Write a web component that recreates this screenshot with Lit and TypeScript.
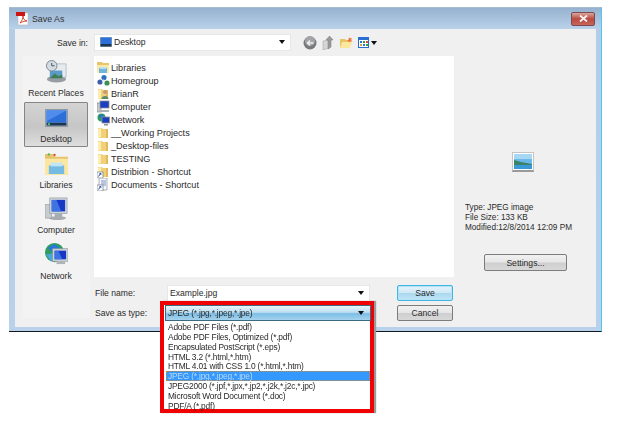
import { LitElement, html, css, svg } from "lit";
import { customElement } from "lit/decorators.js";

const folder = (extra = svg``) => html`<svg class="fi" viewBox="0 0 13 13"><path d="M1 2h4l1 1h5v9H1z" fill="#f0d078"/><path d="M1 3v9l3-1V2z" fill="#fbeeb0"/><path d="M9 3h2v9H9z" fill="#e2b95a"/>${extra}</svg>`;
const shortcut = svg`<rect x="0" y="7" width="6" height="6" fill="#fff" stroke="#778"  stroke-width=".7"/><path d="M1.5 11.5l2-3M2.5 8.5h1.4v1.4" stroke="#1b4fa8" fill="none"/>`;

const fileIcons = [
  html`<svg class="fi" viewBox="0 0 13 13"><path d="M0 1h5l1 1h6v4H0z" fill="#e8c56a"/><path d="M0 4h12v8H0z" fill="#fbe9a8" /><path d="M2 7h8v5H2z" fill="#6fb4dc"/><path d="M3 6h6v2H3z" fill="#b8e0f4"/></svg>`,
  html`<svg class="fi" viewBox="0 0 13 13"><circle cx="7" cy="3.5" r="2.6" fill="#2f6fc0"/><circle cx="3" cy="8" r="2.6" fill="#3c5fa8"/><circle cx="10" cy="9" r="2.6" fill="#3d8f55"/><circle cx="6.5" cy="7" r="1.6" fill="#dbe8f6"/></svg>`,
  folder(svg`<circle cx="8" cy="5" r="2" fill="#c79a78"/><path d="M4.5 12c0-4 7-4 7 0z" fill="#5d8a68"/>`),
  html`<svg class="fi" viewBox="0 0 13 13"><rect x="0" y="3" width="4" height="9" fill="#c8ccd0" stroke="#777" stroke-width=".6"/><rect x="3" y="1" width="9" height="7" fill="#1c3fc0" stroke="#8a9098" stroke-width=".8"/><path d="M2 10h10v2H2z" fill="#aab0b6"/></svg>`,
  html`<svg class="fi" viewBox="0 0 13 13"><circle cx="4.5" cy="4.5" r="4" fill="#2d9a6a"/><path d="M2 2.5l3-1 2 2-3 2z" fill="#2c6fcf"/><rect x="5" y="4" width="7.5" height="6" fill="#1c3fc0" stroke="#8a9098" stroke-width=".8"/><path d="M7 11h4v1.5H7z" fill="#8a9098"/></svg>`,
  folder(),
  folder(),
  folder(),
  folder(shortcut),
  html`<svg class="fi" viewBox="0 0 13 13"><path d="M2 0h8v12H2z" fill="#f4f6fa" stroke="#8a94a4" stroke-width=".7"/><path d="M4 3h5M4 5h5M4 7h5" stroke="#5d7fb8" stroke-width=".8"/>${shortcut}</svg>`,
];

const files = ["Libraries", "Homegroup", "BrianR", "Computer", "Network", "__Working Projects", "_Desktop-files", "TESTING", "Distribion - Shortcut", "Documents - Shortcut"];
const types = ["Adobe PDF Files (*.pdf)", "Adobe PDF Files, Optimized (*.pdf)", "Encapsulated PostScript (*.eps)", "HTML 3.2 (*.html,*.htm)", "HTML 4.01 with CSS 1.0 (*.html,*.htm)", "JPEG (*.jpg,*.jpeg,*.jpe)", "JPEG2000 (*.jpf,*.jpx,*.jp2,*.j2k,*.j2c,*.jpc)", "Microsoft Word Document (*.doc)", "PDF/A (*.pdf)"];

const places = [
  { label: "Recent Places", cls: "first", icon: html`<svg class="pi" viewBox="0 0 24 24"><ellipse cx="12" cy="20" rx="10" ry="3.5" fill="#9a9ea4"/><path d="M8 4h14v14H8z" fill="#e6ebf0" stroke="#a4acb4" stroke-width=".7"/><path d="M5 11h13v8H5z" fill="#5c9ac8"/><path d="M5 19l5-5 4 3 4-2v4z" fill="#3f7d52"/><circle cx="7" cy="6" r="5.500" fill="#d4dce2" stroke="#7b8692"/><path d="M7 3v3h3" stroke="#405060" fill="none"/></svg>` },
  { label: "Desktop", cls: "sel", icon: html`<svg class="pi" viewBox="0 0 24 20"><rect x="0.5" y="0.5" width="23" height="18" fill="#b9c3cc" stroke="#8b98a4"/><rect x="1.5" y="1.5" width="21" height="13" fill="#2d6fd8"/><path d="M1.5 1.5h21L1.5 13z" fill="#4f8cec"/><rect x="1.5" y="14.5" width="21" height="3" fill="#1e3552"/><circle cx="4" cy="16" r="1.2" fill="#55c46c"/></svg>` },
  { label: "Libraries", cls: "", icon: html`<svg class="pi" viewBox="0 0 24 24"><path d="M0 2h9l2 3h13v19H0z" fill="#e5c36e"/><path d="M0 7h24v17H0z" fill="#fbe6a2"/><path d="M4 14h16v9H4z" fill="#73bbe2"/><path d="M6 11h12v4H6z" fill="#bfe5f6"/><circle cx="4" cy="2.5" r="1.2" fill="#4cb84c"/><circle cx="10" cy="3" r="1.2" fill="#d84a3c"/></svg>` },
  { label: "Computer", cls: "", icon: html`<svg class="pi" viewBox="0 0 24 24"><ellipse cx="13" cy="22" rx="9" ry="2" fill="#a8acb0"/><rect x="0" y="8" width="7" height="14" fill="#c7cccf" stroke="#8a8f94" stroke-width=".6"/><rect x="5" y="1" width="18" height="16" fill="#d0d6dc" stroke="#8d959c" stroke-width=".7"/><path d="M7 3h14v12H7z" fill="#1738c4"/><path d="M7 3h5l5 12H7z" fill="#3d74e2"/><path d="M10 17h8v4H10z" fill="#a6adb3"/></svg>` },
  { label: "Network", cls: "", icon: html`<svg class="pi" viewBox="0 0 24 24"><circle cx="10" cy="10" r="10" fill="#2f9c62"/><path d="M3 5l7-4 5 4-6 6z" fill="#2b78d8"/><path d="M1 12l6-1 3 6-4 2z" fill="#4aa8d8"/><rect x="8" y="6" width="16" height="13" fill="#ced4da" stroke="#8d959c" stroke-width=".7"/><path d="M10 8h12v9H10z" fill="#1738c4"/><path d="M10 8h4l4 9h-8z" fill="#3d74e2"/><path d="M12 19h9v3h-9z" fill="#aeb4b9"/></svg>` },
];

const deskSmall = html`<svg class="ds" viewBox="0 0 12 10"><rect width="12" height="10" fill="#9fb0bf"/><rect x=".5" y=".5" width="11" height="6.500" fill="#2d6fd8"/><rect x=".5" y="7" width="11" height="2.500" fill="#1e3552"/></svg>`;
const arrow = html`<span class="arrow"></span>`;

@customElement("app-root")
export class AppRoot extends LitElement {
  static styles = css`
    :host { display: block; width: 622px; height: 429px; background: #fff; overflow: hidden; font-family: "Liberation Sans", Arial, sans-serif; font-size: 8.6px; color: #2a2a2a; }
    .win { margin: 7px 0 0 9px; width: 593px; height: 325px; box-sizing: border-box; display: flex; flex-direction: column; background: linear-gradient(#b4cce6, #b9d1ea); border-right: 1px solid #48c8f4; border-bottom: 1px solid #101820; border-top: 1px solid #a8bccf; filter: blur(.3px); }
    .title { height: 21px; flex: none; display: flex; align-items: center; background: linear-gradient(#97b2d0, #b9d1ea); padding: 0 6px 0 7px; gap: 3px; }
    .title span { flex: 1; font-size: 8.8px; color: #333; }
    .pdf { width: 13px; height: 14px; }
    .close { width: 24px; height: 14px; box-sizing: border-box; border: 1px solid #7a4a50; border-radius: 2px; background: linear-gradient(#dca69c, #b94a3e 50%, #c9645a); display: flex; align-items: center; justify-content: center; }
    .close svg { width: 9px; height: 7px; }
    .body { flex: 1; margin: 0 5px 4px 6px; background: #f0f0f0; display: grid; grid-template-columns: 79px 360px 1fr; grid-template-rows: 27px 221px 1fr; }
    .bar { grid-column: 1 / -1; display: flex; align-items: center; position: relative; }
    .lbl { width: 73px; text-align: right; margin-right: 6px; }
    .combo { box-sizing: border-box; background: #fff; border: 1px solid #e6e6e6; display: flex; align-items: center; padding: 0 5px 0 2px; }
    .bar .combo { width: 197px; height: 17px; margin-top: -1px; gap: 2px; padding-left: 5px; }
    .ds { width: 12px; height: 10px; }
    .combo span:first-of-type { flex: 1; }
    .arrow { width: 0; height: 0; border: 3px solid transparent; border-top: 4px solid #111; border-bottom: 0; flex: none; }
    .tools { display: flex; align-items: center; margin-left: 12px; gap: 5px; }
    .tools svg { display: block; }
    .tools .arrow { margin-left: -3px; }
    .side { grid-row: 2 / 4; margin: 0 0 9px 8px; background: #f3f3f3; display: flex; flex-direction: column; align-items: stretch; width: 67px; }
    .place { height: 45.5px; box-sizing: border-box; display: flex; flex-direction: column; align-items: center; justify-content: flex-end; padding-bottom: 2px; margin-right: 2px; margin-left: 1px; line-height: 12px; gap: 1px; white-space: nowrap; }
    .place.first { padding-bottom: 3px; }
    .place.sel { border: 1px solid #858585; border-radius: 1px; padding-bottom: 1px; background: linear-gradient(#d4d4d4, #c6c6c6 55%, #dedede); }
    .pi { width: 23px; height: 23px; margin-bottom: 3px; }
    .sel .pi { height: 19px; margin-bottom: 4px; }
    .list { background: #fff; padding: 5px 0 0 3px; font-size: 9.1px; }
    .row { height: 13px; display: flex; align-items: center; gap: 1px; white-space: nowrap; }
    .fi { width: 13px; height: 13px; flex: none; }
    .prev { grid-row: 2 / 4; grid-column: 3; display: flex; flex-direction: column; padding-left: 11px; }
    .thumb { width: 22px; height: 20px; margin: 96px 0 0 47px; box-sizing: border-box; border: 1px solid #c4c4c4; border-bottom: 2px solid #9a9a9a; background: #fff; padding: 1px; flex: none; }
    .thumb svg { display: block; width: 100%; height: 100%; }
    .meta { margin-top: 31px; line-height: 10px; font-size: 8.2px; }
    .btn { box-sizing: border-box; border: 1px solid #7c7c7c; border-radius: 2px; background: linear-gradient(#f1f1f1, #e6e6e6 48%, #cfcfcf 52%, #d8d8d8); display: flex; align-items: center; justify-content: center; }
    .settings { width: 83px; height: 17px; margin: 21px 0 0 19px; }
    .form { display: grid; grid-template-columns: 72px 203px 56px; column-gap: 0; row-gap: 4px; grid-template-rows: 16px 16px; padding: 8px 0 0 1px; align-items: center; position: relative; }
    .form .combo { height: 17px; }
    .form .name { width: 203px; }
    .form .btn { height: 16px; margin-left: 27px; width: 56px; }
    .save { border-color: #3fb6e4; background: linear-gradient(#e6f4fb, #cfe8f6 48%, #a9d8f0 52%, #c4e4f6); box-shadow: inset 0 0 0 1px #b6e2f6; }
    .typecell { height: 16px; position: relative; }
    .red { position: absolute; left: -7px; top: -4px; width: 214px; height: 112px; box-sizing: border-box; border: 4px solid #f00000; box-shadow: 2px 0 1px #9a9a9a; background: #fff; z-index: 2; padding-left: 1px; font-size: 8.4px; letter-spacing: -.2px; }
    .sel-box { height: 16px; box-sizing: border-box; border: 1px solid #3d6a80; background: linear-gradient(#e8f4fa, #bcdff2 45%, #7dbde6 55%, #a6d3ee); display: flex; align-items: center; padding: 0 6px 0 2px; margin-right: -1px; }
    .sel-box span:first-child { flex: 1; }
    .opts { padding-top: 1px; }
    .opt { height: 9.85px; line-height: 10px; padding-left: 3px; white-space: nowrap; }
    .opt.on { background: #3399ff; color: #bcd8f4; outline: 1px dotted #c98a3c; outline-offset: -1px; margin-left: 1px; padding-left: 2px; }
  `;

  render() {
    return html`<div class="win">
      <div class="title">
        <svg class="pdf" viewBox="0 0 13 14"><path d="M2 1h10v12H2z" fill="#fff" stroke="#b8b8b8" stroke-width=".6"/><rect x="0" y="0" width="9" height="4" fill="#cc1414"/><path d="M4 11c2-2 3-5 3-7 0 3 2 5 4 5-3 0-5 1-7 2z" fill="none" stroke="#d8301c" stroke-width=".9"/></svg>
        <span>Save As</span>
        <div class="close"><svg viewBox="0 0 9 7"><path d="M1 .5l7 6M8 .5l-7 6" stroke="#f4f4f4" stroke-width="1.800"/></svg></div>
      </div>
      <div class="body">
        <div class="bar">
          <div class="lbl">Save in:</div>
          <div class="combo">${deskSmall}<span>Desktop</span>${arrow}</div>
          <div class="tools">
            <svg width="14" height="14" viewBox="0 0 14 14"><circle cx="7" cy="7" r="6.500" fill="#77797c"/><circle cx="7" cy="5" r="5" fill="#a2a4a7"/><path d="M10.500 7H5M7 4.500L4.500 7 7 9.500" stroke="#eee" stroke-width="1.500" fill="none"/></svg>
            <svg width="13" height="14" viewBox="0 0 13 14"><path d="M1 5l6-1v8l-6 2z" fill="#d6d6d6" stroke="#aaa" stroke-width=".6"/><path d="M6 13V4H4l3.500-4L11 4H9v7z" fill="#9a9a9a" stroke="#777" stroke-width=".5"/></svg>
            <svg width="13" height="12" viewBox="0 0 13 12"><path d="M0 2h5l1 1h4v8H0z" fill="#e8c468"/><path d="M0 11l2-6h10l-2 6z" fill="#fbe79e"/><path d="M9 0l1 1.500L12 1l-1 2 1.500 1.500H10l-1 1-.5-1.500L7 3.500 8.500 3z" fill="#ee7030"/></svg>
            <svg width="11" height="11" viewBox="0 0 11 11"><rect x=".5" y=".5" width="10" height="10" fill="#fff" stroke="#2a6fd0"/><rect x="1" y="1" width="9" height="2" fill="#2a6fd0"/><rect x="2" y="4" width="2" height="2" fill="#2c72d8"/><rect x="5" y="4" width="2" height="2" fill="#3aa03a"/><rect x="8" y="4" width="2" height="2" fill="#d84a3c"/><rect x="2" y="7" width="2" height="2" fill="#e2a030"/><rect x="5" y="7" width="2" height="2" fill="#2c72d8"/><rect x="8" y="7" width="2" height="2" fill="#3aa03a"/></svg>
            <span class="arrow"></span>
          </div>
        </div>
        <div class="side">
          ${places.map((p) => html`<div class="place ${p.cls}">${p.icon}<div>${p.label}</div></div>`)}
        </div>
        <div class="list">
          ${files.map((f, i) => html`<div class="row">${fileIcons[i]}<span>${f}</span></div>`)}
        </div>
        <div class="prev">
          <div class="thumb"><svg viewBox="0 0 18 15" preserveAspectRatio="none"><rect width="18" height="15" fill="#6cb8ea"/><rect width="18" height="5" fill="#a6d8f4"/><path d="M0 6l7 2 11 2v2H0z" fill="#3c8266"/><rect y="11" width="18" height="4" fill="#3a9ad8"/></svg></div>
          <div class="meta">Type: JPEG image<br />File Size: 133 KB<br />Modified:12/8/2014 12:09 PM</div>
          <div class="btn settings">Settings...</div>
        </div>
        <div class="form">
          <div>File name:</div>
          <div class="combo name"><span>Example.jpg</span>${arrow}</div>
          <div class="btn save">Save</div>
          <div>Save as type:</div>
          <div class="typecell">
            <div class="red">
              <div class="sel-box"><span>JPEG (*.jpg,*.jpeg,*.jpe)</span>${arrow}</div>
              <div class="opts">${types.map((t, i) => html`<div class="opt ${i === 5 ? "on" : ""}">${t}</div>`)}</div>
            </div>
          </div>
          <div class="btn">Cancel</div>
        </div>
      </div>
    </div>`;
  }
}
